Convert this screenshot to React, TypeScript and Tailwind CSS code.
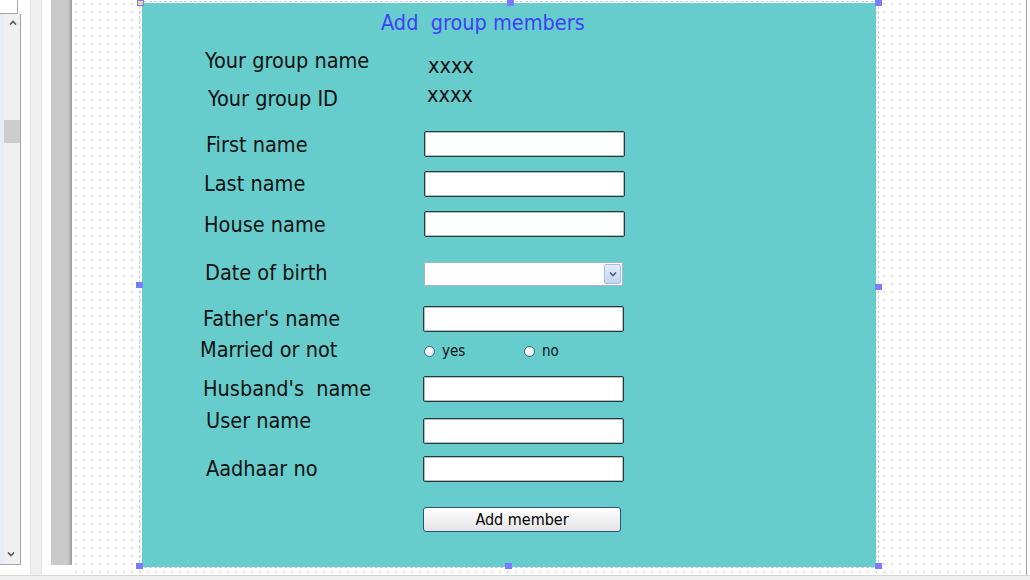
import React from "react";

const font = "font-['DejaVu_Sans_Condensed','DejaVu_Sans',sans-serif]";

function TextBox() {
  return (
    <div className="h-[26px] w-[201px] rounded-[2px] border border-[#263b3b] bg-white shadow-[inset_0_0_0_1px_#b4bebe]" />
  );
}

function Radio({ label, className }: { label: string; className: string }) {
  return (
    <div className={`flex items-center ${className}`}>
      <span className="h-[11px] w-[11px] rounded-full border border-[#4c6688] bg-[radial-gradient(circle_at_40%_35%,#ffffff,#dfe4ec)]" />
      <span className="ml-[7px] text-[15px] leading-[20px]">{label}</span>
    </div>
  );
}

function Chevron({ up }: { up?: boolean }) {
  return (
    <svg width="8" height="5" viewBox="0 0 8 5">
      <path
        d={up ? "M1 4.5 L4 1.5 L7 4.5" : "M1 0.5 L4 3.5 L7 0.5"}
        fill="none"
        stroke="#555"
        strokeWidth="1.6"
      />
    </svg>
  );
}

function ScrollColumn() {
  return (
    <div className="flex w-[21px] flex-col">
      <div className="h-[14px] w-[18px] border-r border-b border-[#a6a6a6] bg-white" />
      <div className="flex h-[551px] border-r border-b border-[#a6a6a6]">
        <div className="w-[4px] bg-[#e7eef6]" />
        <div className="flex flex-1 flex-col items-center bg-[#f0f0f0]">
          <div className="mt-[6px] ml-[1px]">
            <Chevron up />
          </div>
          <div className="mt-[95px] h-[23px] w-full bg-[#cdcdcd]" />
          <div className="flex-1" />
          <div className="mb-[7px] mr-[2px]">
            <Chevron />
          </div>
        </div>
      </div>
    </div>
  );
}

function Handle({ className }: { className: string }) {
  return <div className={`absolute h-[6px] w-[7px] bg-[#7b7bff] ${className}`} />;
}

export default function App() {
  return (
    <div className={`flex h-[580px] w-[1030px] flex-col overflow-hidden bg-white ${font} text-[#111]`}>
      <div className="flex h-[575px]">
        <ScrollColumn />
        <div className="w-[10px] border-r border-[#e2e2e2] bg-white" />
        <div className="w-[10px] bg-[#f0f0f0]" />
        <div className="w-[10px] border-l border-[#e2e2e2] bg-white" />
        <div className="flex w-[21px] flex-col">
          <div className="h-[565px] bg-linear-to-r from-[#cacaca] from-80% to-[#9c9c9c]" />
        </div>

        {/* design canvas */}
        <div className="relative flex-1 bg-white bg-[radial-gradient(circle,#e0e0e0_0.7px,transparent_1px)] bg-[length:8px_8px]">
          <div className="relative mt-[3px] ml-[70px] h-[564px] w-[734px]">
            <div className="pointer-events-none absolute -top-[2px] -left-[3px] -right-[3px] -bottom-[1px] border border-dashed border-[#c9c9f5]" />
            <Handle className="-top-[3px] -left-[5px] border border-[#7b7bff] bg-[#e6dc8c]" />
            <Handle className="-top-[3px] left-[365px]" />
            <Handle className="-top-[3px] -right-[6px]" />
            <Handle className="top-[279px] -left-[6px]" />
            <Handle className="top-[281px] -right-[6px]" />
            <Handle className="-bottom-[2px] -left-[6px] h-[3px]" />
            <Handle className="-bottom-[2px] left-[363px] h-[3px]" />
            <Handle className="-bottom-[2px] -right-[6px] h-[3px]" />

            <div className="flex h-full w-full flex-col bg-[#66cdcc] pt-[8px] text-[21.5px]">
              <div className="flex h-[24px] items-center pl-[239px] leading-[24px] whitespace-pre text-[#4040f8]">
                {"Add  group members"}
              </div>

              <div className="mt-[13px] flex h-[26px] items-center leading-[24px]">
                <div className="w-[286px] pl-[63px]">Your group name</div>
                <div className="mt-[10px]">xxxx</div>
              </div>

              <div className="mt-[11px] flex h-[26px] items-center leading-[24px]">
                <div className="mt-[2px] w-[285px] pl-[66px]">Your group ID</div>
                <div className="mb-[6px]">xxxx</div>
              </div>

              <div className="mt-[20px] flex h-[26px] items-center leading-[24px]">
                <div className="mt-[2px] w-[282px] pl-[64px]">First name</div>
                <TextBox />
              </div>

              <div className="mt-[14px] flex h-[26px] items-center leading-[24px]">
                <div className="w-[282px] pl-[62px]">Last name</div>
                <TextBox />
              </div>

              <div className="mt-[14px] flex h-[26px] items-center leading-[24px]">
                <div className="mt-[2px] w-[282px] pl-[62px]">House name</div>
                <TextBox />
              </div>

              <div className="mt-[25px] flex h-[24px] items-center leading-[24px]">
                <div className="mb-[2px] w-[282px] pl-[63px]">Date of birth</div>
                <div className="flex h-[24px] w-[199px] items-center justify-end border border-[#a3b6ca] bg-white pr-[1px]">
                  <div className="flex h-[20px] w-[17px] items-center justify-center rounded-[2px] border border-[#a9bfe6] bg-linear-to-b from-[#e4ecfc] to-[#c4d4f4]">
                    <svg width="8" height="5" viewBox="0 0 8 5">
                      <path d="M1 0.5 L4 3.5 L7 0.5" fill="none" stroke="#4d5f80" strokeWidth="1.6" />
                    </svg>
                  </div>
                </div>
              </div>

              <div className="mt-[20px] flex h-[26px] items-center leading-[24px]">
                <div className="w-[281px] pl-[61px]">Father's name</div>
                <TextBox />
              </div>

              <div className="mt-[9px] flex h-[20px] items-center leading-[24px]">
                <div className="mb-[2px] w-[282px] pl-[58px]">Married or not</div>
                <Radio label="yes" className="w-[100px]" />
                <Radio label="no" className="" />
              </div>

              <div className="mt-[15px] flex h-[26px] items-center leading-[24px]">
                <div className="w-[281px] pl-[61px]">Husband's&nbsp;&nbsp;name</div>
                <TextBox />
              </div>

              <div className="mt-[16px] flex h-[26px] items-center leading-[24px]">
                <div className="mb-[20px] w-[281px] pl-[64px]">User name</div>
                <TextBox />
              </div>

              <div className="mt-[12px] flex h-[26px] items-center leading-[24px]">
                <div className="w-[281px] pl-[64px]">Aadhaar no</div>
                <TextBox />
              </div>

              <div className="mt-[25px] flex h-[25px] items-center">
                <div className="w-[281px]" />
                <button className="h-[25px] w-[198px] rounded-[3px] border border-[#2f4d80] bg-linear-to-b from-white to-[#e4e4e4] text-[16px] leading-[20px] text-black">
                  Add member
                </button>
              </div>
            </div>
          </div>
        </div>

        <div className="w-[1px] bg-[#a2a2a2]" />
        <div className="w-[3px] bg-white" />
      </div>
      <div className="h-[5px] border-t border-[#d6d6d6] bg-[#f0f0f0]" />
    </div>
  );
}
